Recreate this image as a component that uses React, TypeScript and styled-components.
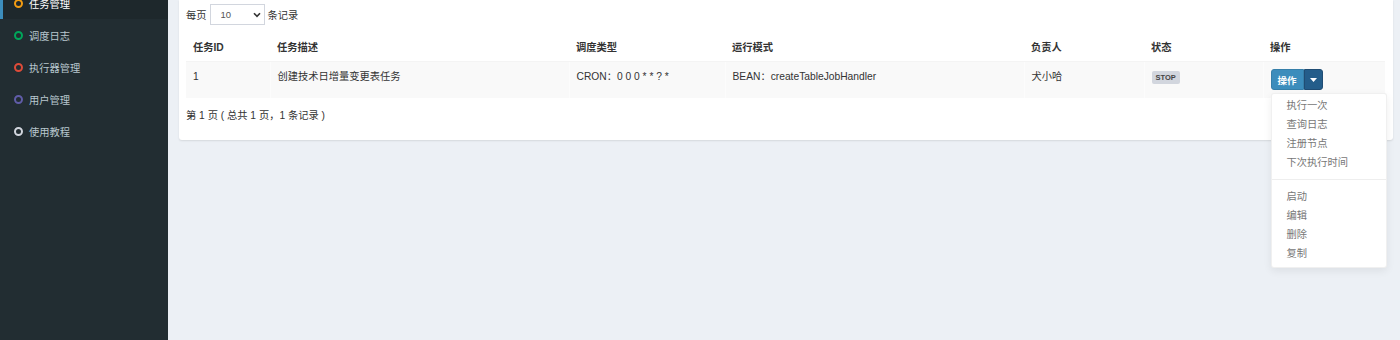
import React from 'react';
import styled, { createGlobalStyle } from 'styled-components';

// ==============================|| JOB LIST PAGE ||============================== //

const GlobalStyle = createGlobalStyle`
    html, body {
        margin: 0;
        padding: 0;
        background: #ecf0f5;
    }
    body {
        font-family: "Liberation Sans", "Noto Sans CJK SC", sans-serif;
        font-size: 10.25px;
        color: #333;
    }
`;

const menus = [
    { label: '任务管理', color: '#f39c12', active: true },
    { label: '调度日志', color: '#00a65a' },
    { label: '执行器管理', color: '#dd4b39' },
    { label: '用户管理', color: '#605ca8' },
    { label: '使用教程', color: '#d2d6de' }
];

const columns = [
    { title: '任务ID', width: 84 },
    { title: '任务描述', width: 299 },
    { title: '调度类型', width: 156 },
    { title: '运行模式', width: 299 },
    { title: '负责人', width: 120 },
    { title: '状态', width: 119 },
    { title: '操作', width: 122 }
];

const actionsTop = ['执行一次', '查询日志', '注册节点', '下次执行时间'];
const actionsBottom = ['启动', '编辑', '删除', '复制'];

const App = () => {
    return (
        <>
            <GlobalStyle />
            <CsPage>
                <CsSidebar>
                    <CsMenu>
                        {menus.map((m) => (
                            <CsMenuItem key={m.label} active={m.active}>
                                <CsCircle color={m.color} />
                                {m.label}
                            </CsMenuItem>
                        ))}
                    </CsMenu>
                </CsSidebar>
                <CsContent>
                    <CsBox>
                        <CsToolbar>
                            每页
                            <CsSelectWrap>
                                <CsSelect defaultValue="10">
                                    <option value="10">10</option>
                                    <option value="25">25</option>
                                    <option value="50">50</option>
                                </CsSelect>
                                <CsChevron width="8" height="6" viewBox="0 0 8 6">
                                    <path d="M1 1.2 L4 4.4 L7 1.2" fill="none" stroke="#333" strokeWidth="1.6" />
                                </CsChevron>
                            </CsSelectWrap>
                            条记录
                        </CsToolbar>
                        <CsTable>
                            <colgroup>
                                {columns.map((c) => (
                                    <col key={c.title} style={{ width: c.width }} />
                                ))}
                            </colgroup>
                            <thead>
                                <tr>
                                    {columns.map((c) => (
                                        <CsTh key={c.title}>{c.title}</CsTh>
                                    ))}
                                </tr>
                            </thead>
                            <tbody>
                                <tr>
                                    <CsTd>1</CsTd>
                                    <CsTd>创建技术日增量变更表任务</CsTd>
                                    <CsTd>CRON：0 0 0 * * ? *</CsTd>
                                    <CsTd>BEAN：createTableJobHandler</CsTd>
                                    <CsTd>犬小哈</CsTd>
                                    <CsTd>
                                        <CsLabel>STOP</CsLabel>
                                    </CsTd>
                                    <CsTd>
                                        <CsBtnGroup>
                                            <CsBtn>操作</CsBtn>
                                            <CsBtnToggle>
                                                <svg width="7" height="4" viewBox="0 0 7 4">
                                                    <path d="M0 0 L7 0 L3.5 4 Z" fill="#fff" />
                                                </svg>
                                            </CsBtnToggle>
                                            <CsDropdown>
                                                {actionsTop.map((a) => (
                                                    <CsDropItem key={a}>{a}</CsDropItem>
                                                ))}
                                                <CsDivider />
                                                {actionsBottom.map((a) => (
                                                    <CsDropItem key={a}>{a}</CsDropItem>
                                                ))}
                                            </CsDropdown>
                                        </CsBtnGroup>
                                    </CsTd>
                                </tr>
                            </tbody>
                        </CsTable>
                        <CsInfo>第 1 页 ( 总共 1 页，1 条记录 )</CsInfo>
                    </CsBox>
                </CsContent>
            </CsPage>
        </>
    );
};

export default App;

const CsPage = styled.div`
    display: flex;
    height: 340px;
    overflow: hidden;
`
const CsSidebar = styled.aside`
    width: 168px;
    flex-shrink: 0;
    background: #222d32;
    overflow: hidden;
`
const CsMenu = styled.ul`
    list-style: none;
    margin: -13px 0 0;
    padding: 0;
`
const CsMenuItem = styled.li<{ active?: boolean }>`
    display: flex;
    align-items: center;
    gap: 6px;
    height: 32px;
    padding-left: 11px;
    box-sizing: border-box;
    border-left: 3px solid ${({ active }) => (active ? '#3c8dbc' : 'transparent')};
    background: ${({ active }) => (active ? '#1e282c' : 'transparent')};
    color: ${({ active }) => (active ? '#fff' : '#b8c7ce')};
    font-size: 10.25px;
`
const CsCircle = styled.span<{ color: string }>`
    width: 5px;
    height: 5px;
    border-radius: 50%;
    border: 2px solid ${({ color }) => color};
`
const CsContent = styled.main`
    flex: 1;
    padding: 0 7px 0 11px;
`
const CsBox = styled.section`
    background: #fff;
    padding: 4px 8px 17px 7px;
    box-shadow: 0 1px 2px rgba(0, 0, 0, 0.1);
    border-radius: 0 0 3px 3px;
`
const CsToolbar = styled.div`
    display: flex;
    align-items: center;
    gap: 4px;
    height: 21px;
    margin-bottom: 9px;
`
const CsSelectWrap = styled.div`
    position: relative;
    width: 55px;
    height: 21px;
    margin: 0 -1px 0 -1px;
`
const CsSelect = styled.select`
    appearance: none;
    width: 100%;
    height: 100%;
    border: 1px solid #d2d6de;
    border-radius: 0;
    background: #fff;
    padding: 0 0 0 10px;
    font-family: inherit;
    font-size: 9.5px;
    color: #555;
    outline: none;
`
const CsChevron = styled.svg`
    position: absolute;
    right: 4px;
    top: 8px;
    pointer-events: none;
`
const CsTable = styled.table`
    width: 1199px;
    border-collapse: collapse;
    table-layout: fixed;
`
const CsTh = styled.th`
    text-align: left;
    font-weight: bold;
    padding: 7px 7px 6px;
    line-height: 14px;
    border-bottom: 1px solid #f4f4f4;
    background: #fff;
    white-space: nowrap;
`
const CsTd = styled.td`
    vertical-align: top;
    padding: 8px 7px 8px;
    line-height: 14px;
    background: #f9f9f9;
    border-left: 1px solid #fcfcfc;
    white-space: nowrap;
    &:first-child {
        border-left: none;
    }
`
const CsLabel = styled.span`
    display: inline-block;
    padding: 0 4px;
    height: 13px;
    line-height: 13px;
    background: #d2d6de;
    color: #444;
    font-size: 7.5px;
    font-weight: bold;
    border-radius: 2px;
`
const CsBtnGroup = styled.div`
    position: relative;
    display: inline-flex;
    height: 21px;
    margin-top: -1px;
`
const CsBtn = styled.button`
    width: 33px;
    height: 21px;
    border: 1px solid #367fa9;
    border-radius: 3px 0 0 3px;
    background: #3c8dbc;
    color: #fff;
    font-family: inherit;
    font-size: 9.5px;
    font-weight: bold;
    padding: 0;
`
const CsBtnToggle = styled.button`
    width: 19px;
    height: 21px;
    border: 1px solid #204d74;
    border-radius: 0 3px 3px 0;
    background: #245d8a;
    display: flex;
    align-items: center;
    justify-content: center;
    padding: 0;
`
const CsDropdown = styled.ul`
    position: absolute;
    top: 24px;
    left: 0;
    width: 116px;
    box-sizing: border-box;
    margin: 0;
    padding: 2px 0 4px;
    list-style: none;
    background: #fff;
    border: 1px solid rgba(0, 0, 0, 0.06);
    border-radius: 3px;
    box-shadow: 0 3px 8px rgba(0, 0, 0, 0.07);
    z-index: 10;
`
const CsDropItem = styled.li`
    height: 19px;
    line-height: 19px;
    padding-left: 15px;
    color: #777;
    font-size: 10.25px;
`
const CsDivider = styled.li`
    height: 1px;
    margin: 7px 0 7px;
    background: #eee;
`
const CsInfo = styled.div`
    margin-top: 11px;
    line-height: 14px;
`
